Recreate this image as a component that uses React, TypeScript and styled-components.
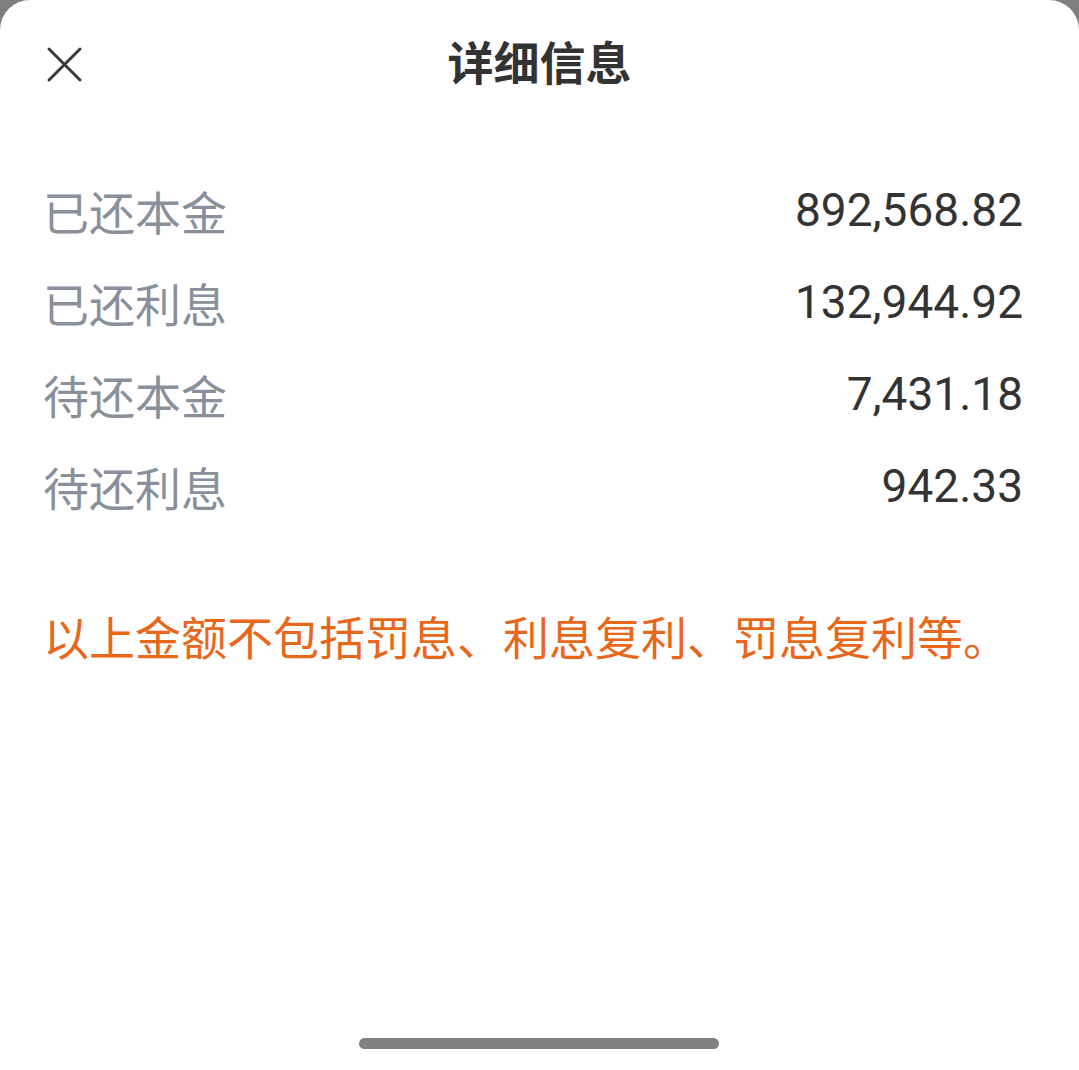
import React from "react";
import styled, { createGlobalStyle } from "styled-components";

const GlobalStyle = createGlobalStyle`
  html, body {
    margin: 0;
    padding: 0;
    background: #7f7f7f;
  }
  * { box-sizing: border-box; }
`;

const Sheet = styled.div`
  width: 1079px;
  height: 1070px;
  background: #ffffff;
  border-radius: 30px 30px 0 0;
  display: flex;
  flex-direction: column;
  position: relative;
  font-family: "Noto Sans CJK SC", "Noto Sans", sans-serif;
  text-spacing-trim: space-all;
`;

const Header = styled.header`
  height: 120px;
  display: flex;
  align-items: center;
  justify-content: center;
  position: relative;
`;

const CloseButton = styled.button`
  position: absolute;
  left: 44px;
  top: 44px;
  width: 40px;
  height: 40px;
  padding: 0;
  border: none;
  background: transparent;
  display: flex;
  align-items: center;
  justify-content: center;
  cursor: pointer;
`;

const Title = styled.h1`
  margin: 0;
  font-size: 46px;
  font-weight: 700;
  color: #333333;
  line-height: 1;
`;

const List = styled.div`
  margin-top: 44px;
  padding: 0 56px 0 43px;
  display: flex;
  flex-direction: column;
`;

const Row = styled.div`
  height: 92px;
  display: flex;
  align-items: center;
  justify-content: space-between;
`;

const Label = styled.span`
  font-size: 46px;
  color: #8a909b;
  line-height: 1;
`;

const Value = styled.span`
  font-family: Roboto, "Noto Sans", sans-serif;
  font-size: 46px;
  color: #333333;
  line-height: 1;
`;

const Note = styled.p`
  margin: 57px 0 0;
  padding: 0 43px;
  height: 92px;
  display: flex;
  align-items: center;
  font-size: 46px;
  color: #e8671a;
  line-height: 1;
  white-space: nowrap;
`;

const HomeBar = styled.div`
  position: absolute;
  left: 359px;
  top: 1038px;
  width: 360px;
  height: 11px;
  border-radius: 6px;
  background: #808080;
`;

const rows = [
  { label: "已还本金", value: "892,568.82" },
  { label: "已还利息", value: "132,944.92" },
  { label: "待还本金", value: "7,431.18" },
  { label: "待还利息", value: "942.33" },
];

export default function App() {
  return (
    <>
      <GlobalStyle />
      <Sheet lang="zh-CN">
        <Header>
          <CloseButton aria-label="关闭">
            <svg width="40" height="40" viewBox="0 0 40 40">
              <path
                d="M5 5 L36 36 M36 5 L5 36"
                stroke="#3a3a3a"
                strokeWidth="3"
                strokeLinecap="round"
                fill="none"
              />
            </svg>
          </CloseButton>
          <Title>详细信息</Title>
        </Header>
        <List>
          {rows.map((r) => (
            <Row key={r.label}>
              <Label>{r.label}</Label>
              <Value>{r.value}</Value>
            </Row>
          ))}
        </List>
        <Note>以上金额不包括罚息、利息复利、罚息复利等。</Note>
        <HomeBar />
      </Sheet>
    </>
  );
}
